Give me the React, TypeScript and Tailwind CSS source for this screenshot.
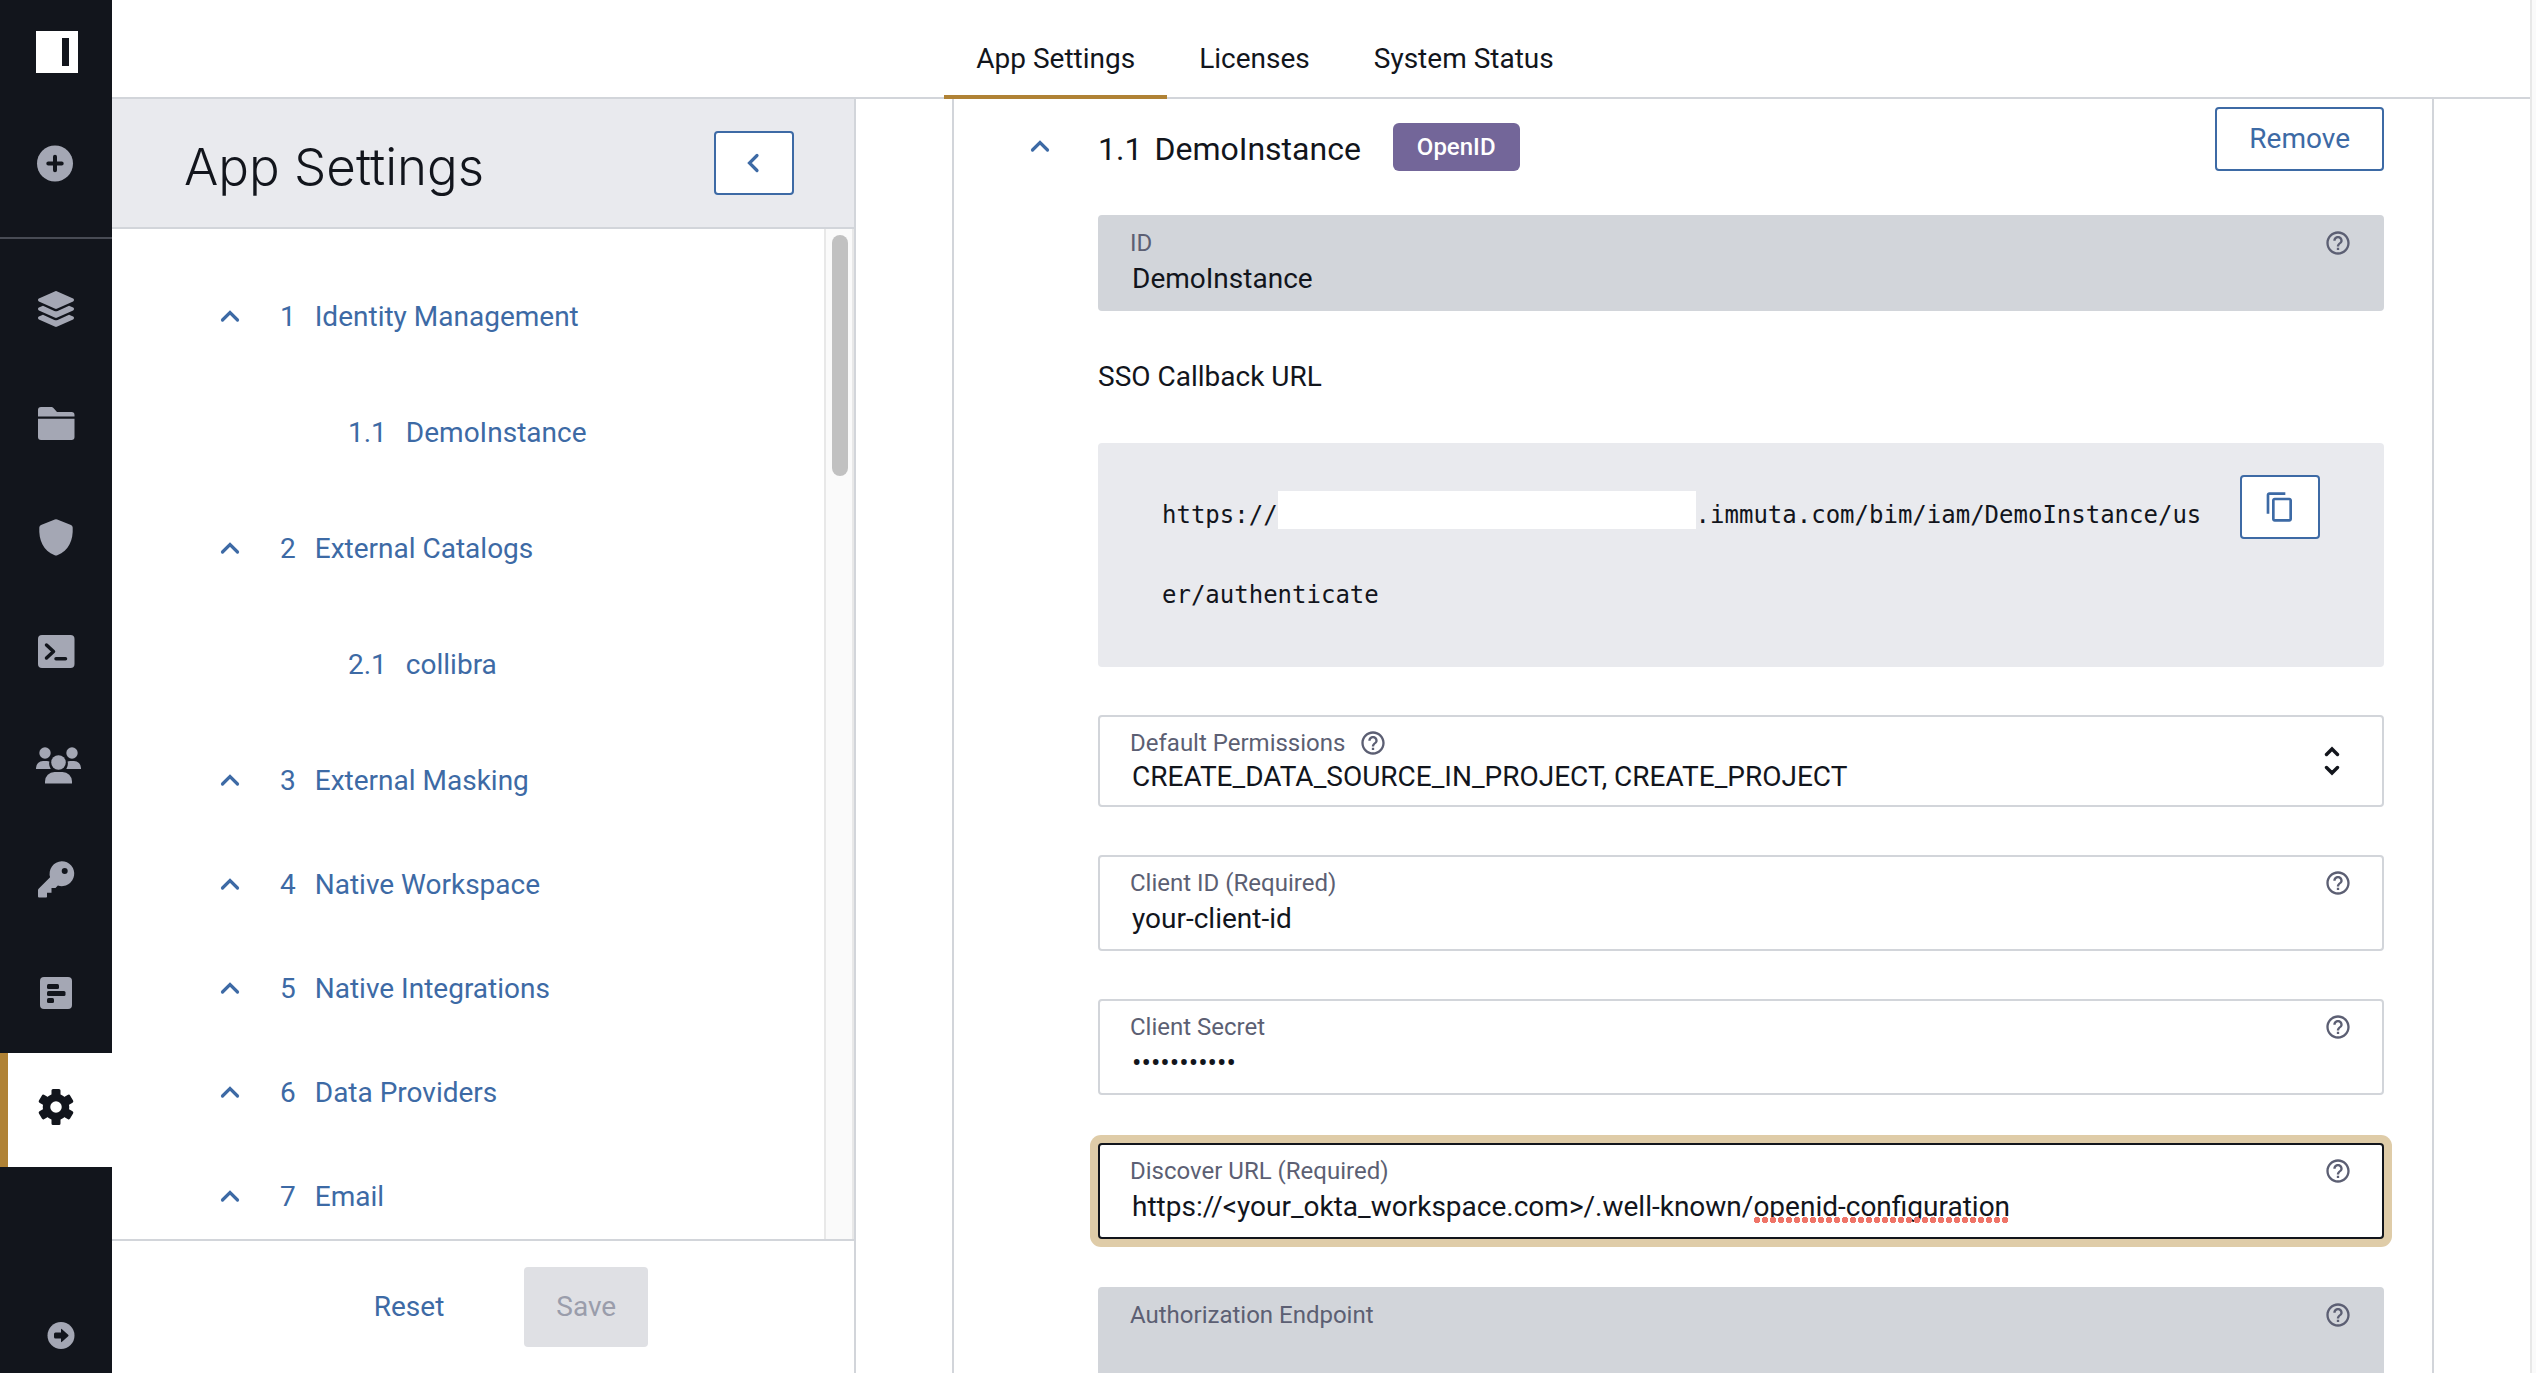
import { useId, useState } from 'react';
import type { ReactNode } from 'react';
import { FaLayerGroup } from 'react-icons/fa';
import { MdContentCopy, MdHelpOutline } from 'react-icons/md';

type Section = {
  number: string;
  title: string;
  children?: { number: string; title: string }[];
};

const tabs = ['App Settings', 'Licenses', 'System Status'];

const sections: Section[] = [
  { number: '1', title: 'Identity Management', children: [{ number: '1.1', title: 'DemoInstance' }] },
  { number: '2', title: 'External Catalogs', children: [{ number: '2.1', title: 'collibra' }] },
  { number: '3', title: 'External Masking' },
  { number: '4', title: 'Native Workspace' },
  { number: '5', title: 'Native Integrations' },
  { number: '6', title: 'Data Providers' },
  { number: '7', title: 'Email' },
];

function RailIcon({ children }: { children: ReactNode }) {
  return (
    <svg viewBox="0 0 48 48" className="size-12 overflow-visible" fill="currentColor" aria-hidden="true">
      {children}
    </svg>
  );
}

const railItems: { label: string; icon: ReactNode; active?: boolean }[] = [
  { label: 'Data Sources', icon: <FaLayerGroup className="size-9" /> },
  {
    label: 'Projects',
    icon: (
      <RailIcon>
        <path d="M6 17.5V11a3 3 0 0 1 3-3h10.500q1 0 1.700.8L25 13h14.500a3 3 0 0 1 3 3v1.500z" />
        <path d="M6 19.700h36.500V38a3 3 0 0 1-3 3H9a3 3 0 0 1-3-3z" />
      </RailIcon>
    ),
  },
  {
    label: 'Policies',
    icon: (
      <RailIcon>
        <path d="M22.800 6.400q1.200-.5 2.400 0L39 12.100q1.600.7 1.700 2.400C41.300 27 37 37.500 25.300 42.300q-1.300.5-2.600 0C11 37.500 6.700 27 7.300 14.500q.1-1.700 1.700-2.400z" />
      </RailIcon>
    ),
  },
  {
    label: 'Query Editor',
    icon: (
      <RailIcon>
        <rect x="6" y="8" width="36.500" height="33" rx="4" />
        <path
          d="M14.500 18l7 6.500-7 6.500M24 31.700h9.500"
          fill="none"
          stroke="#12151c"
          strokeWidth="3.500"
          strokeLinecap="round"
          strokeLinejoin="round"
        />
      </RailIcon>
    ),
  },
  {
    label: 'People',
    icon: (
      <RailIcon>
        <circle cx="13" cy="12" r="5.700" />
        <circle cx="40" cy="12" r="5.700" />
        <circle cx="26.500" cy="21.500" r="7.300" />
        <path d="M4 28v-1a7 7 0 0 1 7-7h4q1.300 0 2.400.4a10 10 0 0 0 1.300 7.600z" />
        <path d="M49 28v-1a7 7 0 0 0-7-7h-4q-1.300 0-2.400.4a10 10 0 0 1-1.300 7.600z" />
        <path d="M13 42.500v-2a9.500 9.500 0 0 1 9.500-9.500h8a9.500 9.500 0 0 1 9.500 9.500v2z" />
      </RailIcon>
    ),
  },
  {
    label: 'Access',
    icon: (
      <RailIcon>
        <path
          fillRule="evenodd"
          d="M29.700 6.200a12.500 12.500 0 1 1-3.800 24.400L23.500 33h-4v4.700H15v4q0 .8-.8.8H7q-1 0-1-1v-6.300q0-.8.6-1.400l11.500-11.500A12.500 12.500 0 0 1 29.700 6.200zM32.700 13a3 3 0 1 0 0 6 3 3 0 0 0 0-6z"
        />
      </RailIcon>
    ),
  },
  {
    label: 'Audit',
    icon: (
      <RailIcon>
        <rect x="8" y="8" width="32" height="32" rx="4" />
        <g fill="#12151c">
          <rect x="15" y="15" width="12" height="5" rx="1.500" />
          <rect x="15" y="22" width="18.500" height="5" rx="1.500" />
          <rect x="15" y="29" width="7" height="5" rx="1.500" />
        </g>
      </RailIcon>
    ),
  },
  {
    label: 'App Settings',
    active: true,
    icon: (
      <RailIcon>
        <circle cx="24" cy="24" r="9.500" fill="none" stroke="currentColor" strokeWidth="7.500" />
        {[0, 60, 120, 180, 240, 300].map((angle) => (
          <path
            key={angle}
            d="M18.500 13.500l1-1.500V7.500q0-1.500 1.500-1.500h6q1.500 0 1.500 1.500V12l1 1.500-2 2h-7z"
            transform={`rotate(${angle} 24 24)`}
          />
        ))}
      </RailIcon>
    ),
  },
];

function ChevronUp() {
  return (
    <svg viewBox="0 0 36 36" className="size-9 shrink-0" fill="none" aria-hidden="true">
      <path d="M10.500 21l7.500-7.500 7.500 7.500" stroke="currentColor" strokeWidth="3.200" strokeLinecap="round" />
    </svg>
  );
}

function Rail() {
  return (
    <aside className="flex w-28 shrink-0 flex-col bg-[#12151c] text-[#a4a7b4]">
      <div className="flex h-[239px] flex-col gap-[72px] border-b-2 border-[#484b54] pt-[31px] pl-9">
        <svg viewBox="0 0 42 42" className="size-[42px]" aria-hidden="true">
          <rect width="42" height="42" fill="#fff" />
          <rect x="26" y="7" width="7" height="28" fill="#12151c" />
        </svg>
        <button type="button" aria-label="Create" className="size-fit">
          <svg viewBox="0 0 38 38" className="size-[38px]" aria-hidden="true">
            <circle cx="19" cy="18.500" r="18" fill="currentColor" />
            <path d="M19 11.800v13.400M12.300 18.500h13.400" stroke="#12151c" strokeWidth="4" strokeLinecap="round" />
          </svg>
        </button>
      </div>

      <nav className="flex flex-col pt-4">
        {railItems.map((item) => (
          <a
            key={item.label}
            href="#"
            aria-label={item.label}
            className={
              item.active
                ? 'flex h-[114px] items-center justify-center border-l-8 border-[#b08235] bg-white pr-2 pb-1.5 text-[#12151c]'
                : 'flex h-[114px] items-center justify-center pb-1.5'
            }
          >
            {item.icon}
          </a>
        ))}
      </nav>

      <button type="button" aria-label="Expand navigation" className="mt-auto mb-6 ml-[47px] size-fit">
        <svg viewBox="0 0 28 28" className="size-7" aria-hidden="true">
          <circle cx="14" cy="14.500" r="13.500" fill="currentColor" />
          <path
            d="M8.500 11.500H14V8.700q0-1.500 1-.5l6.200 5.600q.8.700 0 1.400L15 20.800q-1 1-1-.5v-2.800H8.500q-1.500 0-1.500-1.500v-3q0-1.500 1.500-1.500z"
            fill="#12151c"
          />
        </svg>
      </button>
    </aside>
  );
}

function SettingsPanel() {
  return (
    <section className="flex w-[744px] shrink-0 flex-col border-r-2 border-[#d2d5da]">
      <div className="flex h-[130px] shrink-0 items-center justify-between border-b-2 border-[#d2d5da] bg-[#e9eaee] pr-[60px] pl-[72px]">
        <h1 className="pt-2 font-[Inter] text-[51px] leading-[64px] font-light">App Settings</h1>
        <button
          type="button"
          aria-label="Collapse panel"
          className="flex h-16 w-20 items-center justify-center rounded border-2 border-[#3d6aa5] bg-white text-[#3d6aa5]"
        >
          <svg viewBox="0 0 36 36" className="size-9" fill="none" aria-hidden="true">
            <path d="M21 10.500L13.500 18l7.500 7.500" stroke="currentColor" strokeWidth="3.200" strokeLinecap="round" />
          </svg>
        </button>
      </div>

      <div className="flex min-h-0 flex-1">
        <ul className="flex-1 overflow-hidden pt-9 text-[#3d6aa5]">
          {sections.map((section) => (
            <li key={section.number}>
              <a href="#" className="flex h-[104px] items-center pl-[100px]">
                <ChevronUp />
                <span className="ml-8">{section.number}</span>
                <span className="ml-[19px]">{section.title}</span>
              </a>
              {section.children?.map((child) => (
                <a key={child.number} href="#" className="my-3 flex h-[104px] items-center pl-[236px]">
                  <span>{child.number}</span>
                  <span className="ml-[19px]">{child.title}</span>
                </a>
              ))}
            </li>
          ))}
        </ul>
        <div className="w-[30px] shrink-0 border-x-2 border-[#e8e8e8] bg-[#fafafa] px-1.5 pt-1.5">
          <div className="h-[241px] w-4 rounded-full bg-[#c1c1c1]" />
        </div>
      </div>

      <div className="flex h-[134px] shrink-0 items-center justify-center gap-6 border-t-2 border-[#d2d5da]">
        <button type="button" className="h-20 px-14 text-[#3d6aa5]">
          Reset
        </button>
        <button type="button" disabled className="h-20 rounded bg-[#dfe0e4] px-8 text-[#9a9dab]">
          Save
        </button>
      </div>
    </section>
  );
}

type FieldProps = {
  label: string;
  value?: string;
  type?: string;
  disabled?: boolean;
  focused?: boolean;
  children?: ReactNode;
};

function Field({ label, value = '', type = 'text', disabled, focused, children }: FieldProps) {
  const id = useId();
  const [text, setText] = useState(value);

  let look = 'border-[#d2d5da] bg-white';
  if (disabled) look = 'border-[#d2d5da] bg-[#d2d5da]';
  if (focused) look = 'border-[#12151c] bg-white shadow-[0_0_0_8px_#dfcca8]';

  return (
    <div className={`relative shrink-0 rounded border-2 px-[30px] pt-3 pb-2.5 ${look}`}>
      <div className="flex h-7 items-center justify-between text-[#5c5f73]">
        <label htmlFor={id} className="text-2xl leading-7">
          {label}
        </label>
        <MdHelpOutline className="size-7" />
      </div>
      <input
        id={id}
        type={type}
        value={text}
        disabled={disabled}
        spellCheck={false}
        onChange={(e) => setText(e.target.value)}
        className="block h-[42px] w-full bg-transparent pl-0.5 text-[#12151c] outline-none"
      />
      {children}
    </div>
  );
}

function PermissionsSelect() {
  return (
    <div className="relative shrink-0 rounded border-2 border-[#d2d5da] px-[30px] pt-3 pb-2">
      <div className="flex h-7 items-center gap-[14px] text-[#5c5f73]">
        <label htmlFor="permissions" className="text-2xl leading-7">
          Default Permissions
        </label>
        <MdHelpOutline className="size-7" />
      </div>
      <select id="permissions" className="block h-10 w-full appearance-none bg-transparent pl-0.5 outline-none">
        <option>CREATE_DATA_SOURCE_IN_PROJECT, CREATE_PROJECT</option>
      </select>
      <svg
        viewBox="0 0 20 32"
        className="pointer-events-none absolute inset-y-0 right-10 my-auto h-8 w-5"
        fill="none"
        stroke="currentColor"
        strokeWidth="3.400"
        aria-hidden="true"
      >
        <path d="M4.500 9.500L10 4l5.500 5.500M4.500 22.500L10 28l5.500-5.500" strokeLinecap="round" />
      </svg>
    </div>
  );
}

function CallbackUrl() {
  return (
    <>
      <h3 className="mt-12">SSO Callback URL</h3>
      <div className="mt-12 flex shrink-0 items-start gap-8 rounded bg-[#e9eaee] px-16 py-8">
        <p className="flex-1 font-['DejaVu_Sans_Mono',monospace] text-2xl leading-[80px] break-all">
          https://
          <span className="inline-block h-[38px] w-[418px] bg-white align-[-6px]" />
          .immuta.com/bim/iam/DemoInstance/us
          <wbr />
          er/authenticate
        </p>
        <button
          type="button"
          aria-label="Copy URL"
          className="flex h-16 w-20 items-center justify-center rounded border-2 border-[#3d6aa5] bg-white text-[#3d6aa5]"
        >
          <MdContentCopy className="size-8" />
        </button>
      </div>
    </>
  );
}

export default function App() {
  return (
    <div className="flex h-screen overflow-hidden bg-white font-[Roboto,sans-serif] text-[28px] leading-9 text-[#12151c]">
      <Rail />

      <div className="flex min-w-0 flex-1 flex-col">
        <header className="flex h-[99px] shrink-0 items-end justify-center border-b-2 border-[#d2d5da] pr-28">
          {tabs.map((tab, index) => (
            <a
              key={tab}
              href="#"
              className={
                index === 0
                  ? '-mb-0.5 border-b-4 border-[#b08235] px-8 pb-[18px]'
                  : 'px-8 pb-5'
              }
            >
              {tab}
            </a>
          ))}
        </header>

        <div className="flex min-h-0 flex-1">
          <SettingsPanel />

          <main className="min-w-0 flex-1 overflow-hidden px-24">
            <div className="flex flex-col border-x-2 border-[#d2d5da] pt-2 pr-12">
              <div className="flex h-16 shrink-0 items-end pl-[68px]">
                <button type="button" aria-label="Collapse section" className="flex h-12 w-[76px] items-center text-[#3d6aa5]">
                  <ChevronUp />
                </button>
                <h2 className="text-[32px] leading-[44px]">
                  <span className="mr-3">1.1</span>
                  DemoInstance
                </h2>
                <span className="ml-8 flex h-12 items-center rounded-md bg-[#736699] px-6 text-2xl font-medium text-white">
                  OpenID
                </span>
                <button type="button" className="ml-auto h-16 rounded border-2 border-[#3d6aa5] px-8 text-[#3d6aa5]">
                  Remove
                </button>
              </div>

              <div className="flex flex-col pt-11 pl-36">
                <Field label="ID" value="DemoInstance" disabled />
                <CallbackUrl />
                <div className="mt-12 flex flex-col gap-12">
                  <PermissionsSelect />
                  <Field label="Client ID (Required)" value="your-client-id" />
                  <Field label="Client Secret" value="secretvalue" type="password" />
                  <Field
                    label="Discover URL (Required)"
                    value="https://<your_okta_workspace.com>/.well-known/openid-configuration"
                    focused
                  >
                    {/* spelling mark under the last path segment */}
                    <div className="pointer-events-none absolute bottom-[14px] left-[653px] h-1.5 w-64 bg-[radial-gradient(circle,#ef7468_3px,transparent_3px)] bg-[length:8px_6px]" />
                  </Field>
                  <Field label="Authorization Endpoint" disabled />
                </div>
              </div>
            </div>
          </main>
        </div>
      </div>

      {/* page scrollbar gutter */}
      <div className="w-1.5 shrink-0 border-l-2 border-[#e8e8e8] bg-[#fafafa]" />
    </div>
  );
}
